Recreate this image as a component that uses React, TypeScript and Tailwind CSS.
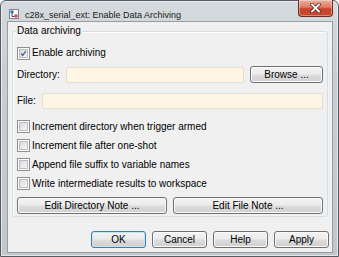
import type { ReactNode } from "react";

const font = "font-['Liberation_Sans',Arial,sans-serif]";

function Button({
  children,
  primary = false,
  className = "",
}: {
  children: ReactNode;
  primary?: boolean;
  className?: string;
}) {
  return (
    <button
      className={`flex h-[17px] items-center justify-center rounded-[3px] border bg-[linear-gradient(#f3f3f3_0%,#ebebeb_48%,#dddddd_52%,#cfcfcf_100%)] text-[10px] leading-none text-black ${
        primary
          ? "border-[#3c7fb1] shadow-[inset_0_0_0_1px_#c4e5f6]"
          : "border-[#707070] shadow-[inset_0_0_0_1px_#fbfbfb]"
      } ${className}`}
    >
      {children}
    </button>
  );
}

function CheckBox({ label, checked = false }: { label: string; checked?: boolean }) {
  return (
    <div className="flex h-[19px] items-center">
      <span className="flex h-[13px] w-[13px] items-center justify-center border border-[#8f8f8f] bg-white p-[1px]">
        <span className="flex h-full w-full items-center justify-center border border-[#b9bcc1] bg-[linear-gradient(135deg,#d6d9dd,#f7f7f7)]">
          {checked && (
            <svg width="9" height="9" viewBox="0 0 9 9">
              <path d="M1.5 4.5 L3.5 7 L7.5 1.5" fill="none" stroke="#4a5e94" strokeWidth="1.6" />
            </svg>
          )}
        </span>
      </span>
      <span className="ml-[2px] text-[10px] leading-none text-black">{label}</span>
    </div>
  );
}

function TitleIcon() {
  return (
    <svg width="10" height="10" viewBox="0 0 10 10">
      <rect x="0.5" y="0.5" width="9" height="9" fill="#ffffff" stroke="#7a8794" />
      <rect x="1.5" y="1.5" width="3" height="3" fill="#2f6fb8" />
      <path d="M3 4.5 V7.5 H5.5" fill="none" stroke="#3a4a5a" strokeWidth="1" />
      <rect x="5.5" y="5.5" width="3" height="3" fill="#d2402c" />
    </svg>
  );
}

export default function App() {
  return (
    <div
      className={`${font} flex h-[257px] w-[339px] flex-col rounded-t-[6px] border border-[#565b61] bg-[linear-gradient(180deg,#d5dade_0%,#c9ced3_30%,#c2c7cc_100%)] px-[5px] pb-[3px] pl-[6px] shadow-[inset_0_0_0_1px_rgba(255,255,255,0.55)]`}
    >
      {/* title bar */}
      <div className="flex h-[20px] items-start">
        <div className="mt-[8px] ml-[2px]">
          <TitleIcon />
        </div>
        <span className="mt-[9px] ml-[6px] text-[9px] leading-[10px] text-[#1a1a1a]">
          c28x_serial_ext: Enable Data Archiving
        </span>
        <div className="mr-[0px] ml-auto flex h-[17px] w-[35px] -mt-[1px] items-center justify-center rounded-b-[4px] border border-t-0 border-[#6e2a1f] bg-[linear-gradient(#eab0a2_0%,#de7a63_45%,#c8432b_55%,#c4492f_100%)] shadow-[inset_0_0_0_1px_rgba(255,255,255,0.35)]">
          <svg width="11" height="10" viewBox="0 0 11 10">
            <path d="M2 1.5 L9 8.5 M9 1.5 L2 8.5" stroke="#5a2a22" strokeWidth="3.4" strokeLinecap="square" />
            <path d="M2 1.5 L9 8.5 M9 1.5 L2 8.5" stroke="#ffffff" strokeWidth="1.8" strokeLinecap="square" />
          </svg>
        </div>
      </div>

      {/* client area */}
      <div className="flex flex-1 flex-col border border-[#979da3] bg-[#f0f0f0]">
        <div className="relative mt-[9px] ml-[4px] w-[316px] rounded-[3px] border border-[#d5dfe5] px-[4px] pt-[13px] pb-[2px] shadow-[inset_1px_1px_0_#ffffff]">
          <span className="absolute -top-[7px] left-[3px] bg-[#f0f0f0] px-[1px] text-[10px] leading-[12px] text-black">
            Data archiving
          </span>

          <div className="-my-[1.5px]">
            <CheckBox label="Enable archiving" checked />
          </div>

          <div className="mt-[5px] flex h-[17px] items-center">
            <span className="w-[49px] text-[10px] leading-none text-black">Directory:</span>
            <div className="h-[16px] flex-1 rounded-[2px] border border-[#e5dfd1] bg-[#fff5e2]" />
            <Button className="ml-[6px] w-[73px]">Browse ...</Button>
          </div>

          <div className="mt-[10px] flex h-[16px] items-center">
            <span className="w-[25px] text-[10px] leading-none text-black">File:</span>
            <div className="h-[16px] flex-1 rounded-[2px] border border-[#e5dfd1] bg-[#fff5e2]" />
          </div>

          <div className="mt-[8px] flex flex-col">
            <CheckBox label="Increment directory when trigger armed" />
            <CheckBox label="Increment file after one-shot" />
            <CheckBox label="Append file suffix to variable names" />
            <CheckBox label="Write intermediate results to workspace" />
          </div>

          <div className="mt-[4px] flex gap-[6px]">
            <Button className="flex-1">Edit Directory Note ...</Button>
            <Button className="flex-1">Edit File Note ...</Button>
          </div>
        </div>

        <div className="mt-[14px] flex justify-end gap-[6px] pr-[3px]">
          <Button primary className="w-[55px]">OK</Button>
          <Button className="w-[55px]">Cancel</Button>
          <Button className="w-[55px]">Help</Button>
          <Button className="w-[55px]">Apply</Button>
        </div>
      </div>
    </div>
  );
}
